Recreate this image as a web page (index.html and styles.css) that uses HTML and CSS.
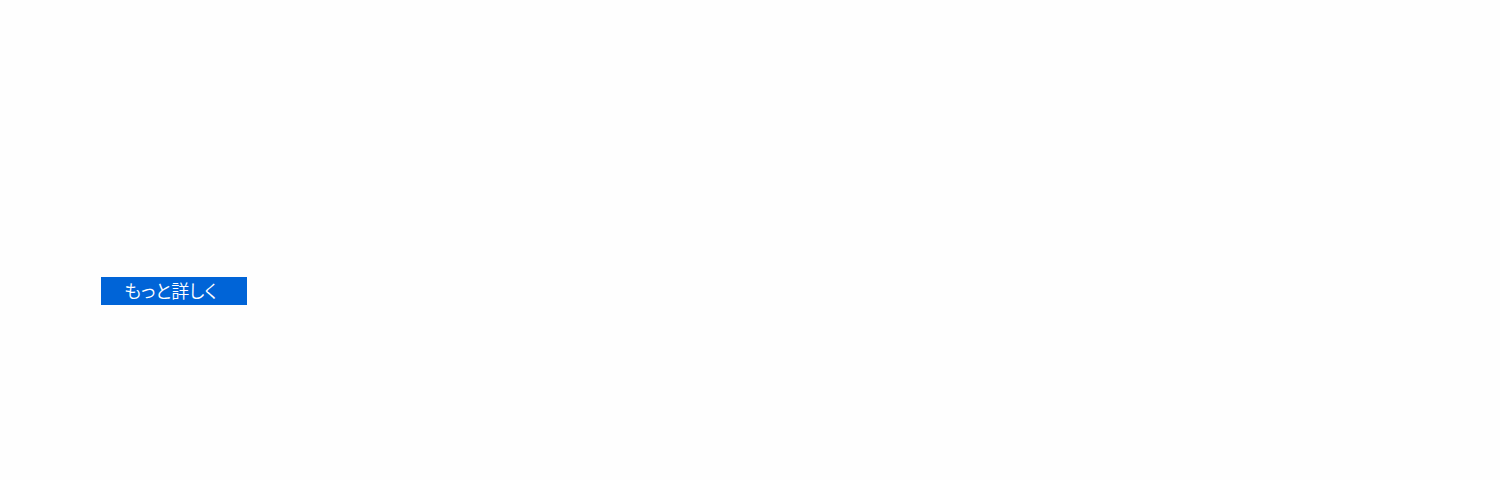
FILE: index.html
```html
<!DOCTYPE html>
<html lang="ja">
<head>
  <meta charset="UTF-8" />
  <meta name="viewport" content="width=device-width, initial-scale=1.0"/>
  <title>もっと詳しく</title>
  <link rel="stylesheet" href="styles.css">
</head>
<body>

  <section class="banner">
    <a class="banner-link" href="#">もっと詳しく</a>
  </section>

</body>
</html>
```

FILE: styles.css
```css
body {
  margin: 0;
  font-family: "Noto Sans CJK JP", sans-serif;
  background: #fefefe;
}
.banner {
  display: flex;
  align-items: flex-start;
  box-sizing: border-box;
  min-height: 100vh;
  padding: 277px 101px 0;
}
.banner-link {
  box-sizing: border-box;
  min-width: 146px;
  padding: 0 24px 2px 23px;
  background: #0064d7;
  color: #fff;
  font-size: 18px;
  font-weight: 350;
  font-feature-settings: "palt";
  line-height: 26px;
  text-decoration: none;
}
.banner-link:hover {
  background: #0056b8;
}
```
